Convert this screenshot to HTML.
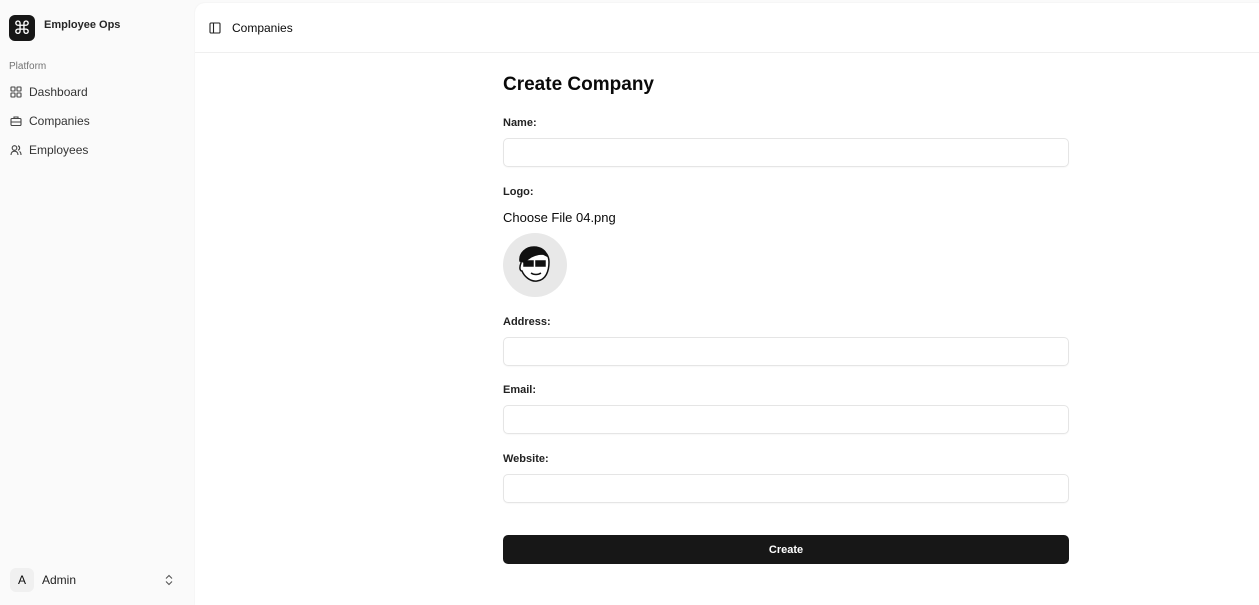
<!DOCTYPE html>
<html><head><style>
*{box-sizing:border-box;margin:0;padding:0}
body{width:1259px;height:602px;background:#fafafa;font-family:"Liberation Sans",sans-serif;color:#0a0a0a;position:relative;overflow:hidden}
.sb{position:absolute;left:0;top:0;width:195px;height:602px}
.logo{position:absolute;left:9px;top:15px;width:26px;height:26px;border-radius:6px;background:#171717;color:#fff;font-size:18px;text-align:center;line-height:26px}
.brand{position:absolute;left:44px;top:19px;font-size:11px;font-weight:bold;color:#262626}
.plat{position:absolute;left:9px;top:61px;font-size:10px;color:#737373}
.nav{position:absolute;left:10px;font-size:12px;color:#333;display:flex;align-items:center;gap:7px}
.nav svg{width:12px;height:12px}
.main{position:absolute;left:195px;top:3px;width:1064px;height:602px;background:#fff;border-radius:10px 0 0 0;box-shadow:0 0 2px rgba(0,0,0,.06)}
.hdr{height:50px;border-bottom:1px solid #efefef;display:flex;align-items:center;padding-left:14px;font-size:12px;gap:11px}
.form{position:absolute;left:308px;top:0;width:566px}
h1{position:absolute;top:71px;font-size:19px;font-weight:bold}
.lab{position:absolute;font-size:11px;font-weight:bold;color:#222}
.inp{position:absolute;left:0;width:566px;height:29px;border:1px solid #e5e5e5;border-radius:5px;box-shadow:0 1px 1px rgba(0,0,0,.03)}
.btn{position:absolute;left:0;top:532px;width:566px;height:29px;background:#171717;border-radius:5px;color:#fff;font-size:11px;font-weight:bold;text-align:center;line-height:31px}
</style></head><body>
<div class="sb">
<div class="logo">⌘</div>
<div class="brand">Employee Ops</div>
<div class="plat">Platform</div>
<div class="nav" style="top:85px"><svg viewBox="0 0 12 12" fill="none" stroke="#444" stroke-width="1.1"><rect x="1" y="1" width="4" height="4" rx=".5"/><rect x="7" y="1" width="4" height="4" rx=".5"/><rect x="1" y="7" width="4" height="4" rx=".5"/><rect x="7" y="7" width="4" height="4" rx=".5"/></svg>Dashboard</div>
<div class="nav" style="top:114px"><svg viewBox="0 0 12 12" fill="none" stroke="#444" stroke-width="1.1"><rect x="1" y="3.5" width="10" height="7" rx="1"/><path d="M4 3.5V2h4v1.5M1 7h10"/></svg>Companies</div>
<div class="nav" style="top:143px"><svg viewBox="0 0 12 12" fill="none" stroke="#444" stroke-width="1.1"><circle cx="4.5" cy="4" r="2.3"/><path d="M1 11c0-2.5 1.5-3.8 3.5-3.8S8 8.5 8 11M8 1.8a2.3 2.3 0 010 4.4M9.5 7.5c1 .5 1.5 1.8 1.5 3.5"/></svg>Employees</div>
<div style="position:absolute;left:10px;top:568px;width:24px;height:24px;border-radius:6px;background:#f0f0f0;text-align:center;line-height:24px;font-size:12px">A</div>
<div style="position:absolute;left:42px;top:573px;font-size:12px;color:#222">Admin</div>
<svg style="position:absolute;left:164px;top:574px" width="10" height="12" viewBox="0 0 10 12" fill="none" stroke="#555" stroke-width="1.1"><path d="M2 4.5L5 1.5 8 4.5M2 7.5L5 10.5 8 7.5"/></svg>
</div>
<div class="main">
<div class="hdr"><svg width="12" height="12" viewBox="0 0 12 12" fill="none" stroke="#222" stroke-width="1.1"><rect x="1" y="1" width="10" height="10" rx="1"/><path d="M4.5 1v10"/></svg><span>Companies</span></div>
<div class="form">
<h1>Create Company</h1>
<div class="lab" style="top:114px">Name:</div>
<div class="inp" style="top:135px"></div>
<div class="lab" style="top:183px">Logo:</div>
<div style="position:absolute;top:207px;font-size:13px">Choose File 04.png</div>
<div style="position:absolute;top:230px;left:0;width:64px;height:64px;border-radius:50%;background:#e8e8e8;overflow:hidden">
<svg width="64" height="64" viewBox="0 0 64 64" fill="none" stroke="#111" stroke-width="1.5"><path d="M18 30c0-10 8-15 16-14 8 1 12 6 12 13 0 9-3 18-12 19-7 1-13-5-15-10-2 0-3-3-1-8z" fill="#fff"/><path d="M17 28c-1-8 6-14 14-14 7 0 12 4 13 9l-4-2c-5 0-10 1-15 5l-4 3z" fill="#111"/><rect x="21" y="28" width="9" height="5" fill="#111"/><rect x="33" y="28" width="9" height="5" fill="#111"/><path d="M28 40c3 2 7 2 10 0"/></svg></div>
<div class="lab" style="top:313px">Address:</div>
<div class="inp" style="top:334px"></div>
<div class="lab" style="top:381px">Email:</div>
<div class="inp" style="top:402px"></div>
<div class="lab" style="top:450px">Website:</div>
<div class="inp" style="top:471px"></div>
<div class="btn">Create</div>
</div>
</div>
</body></html>
